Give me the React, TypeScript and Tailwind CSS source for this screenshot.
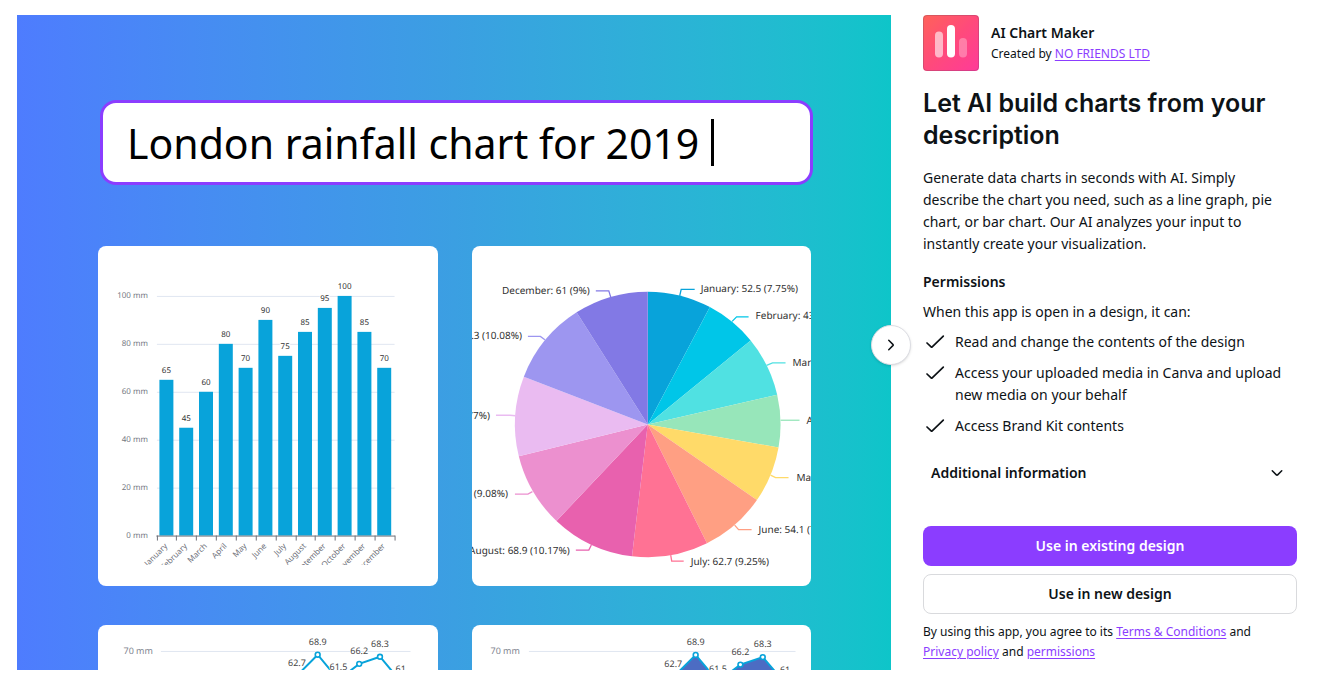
import React from "react";

const bars = [
  { month: "January", value: 65 },
  { month: "February", value: 45 },
  { month: "March", value: 60 },
  { month: "April", value: 80 },
  { month: "May", value: 70 },
  { month: "June", value: 90 },
  { month: "July", value: 75 },
  { month: "August", value: 85 },
  { month: "September", value: 95 },
  { month: "October", value: 100 },
  { month: "November", value: 85 },
  { month: "December", value: 70 },
];

const chartText = "block w-full font-['Noto_Sans',sans-serif] [text-rendering:geometricPrecision]";

function BarChart() {
  const base = 290;
  const step = 19.83;
  return (
    <svg viewBox="0 0 340 340" role="img" aria-label="Rainfall bar chart" className={`${chartText} text-[8px]`}>
      <defs>
        <clipPath id="bar-area">
          <rect x="0" y="0" width="340" height="319.5" />
        </clipPath>
      </defs>
      {[0, 20, 40, 60, 80, 100].map((v) => (
        <g key={v}>
          {v > 0 && <path d={`M59 ${base - v * 2.4 + 0.5}H297`} stroke="#E0E6F1" strokeWidth="1" />}
          <text x="50" y={base - v * 2.4 + 2} textAnchor="end" fill="#747781">
            {v} mm
          </text>
        </g>
      ))}
      {bars.map((b, i) => {
        const cx = 68.5 + i * step;
        const y = base - b.value * 2.4;
        return (
          <g key={b.month}>
            <rect x={cx - 7} y={y} width="14" height={base - y} fill="#08A3DA" />
            <text x={cx} y={y - 7} textAnchor="middle" fill="#333" stroke="#fff" strokeWidth="2" paintOrder="stroke">
              {b.value}
            </text>
          </g>
        );
      })}
      <path d="M58.5 290.5H297.5" stroke="#6E7079" />
      {Array.from({ length: 13 }, (_, i) => (
        <path key={i} d={`M${Math.round(58.5 + i * 19.87) + 0.5} 290V295`} stroke="#6E7079" />
      ))}
      <g clipPath="url(#bar-area)" fill="#6E7079">
        {bars.map((b, i) => (
          <text key={b.month} textAnchor="end" transform={`translate(${70 + i * step} 301) rotate(-45)`}>
            {b.month}
          </text>
        ))}
      </g>
    </svg>
  );
}

const slices = [
  { end: 27.9, fill: "#08A3DA" },
  { end: 50.8, fill: "#00C6E8" },
  { end: 77.1, fill: "#50E1E2" },
  { end: 100, fill: "#97E6BA" },
  { end: 124.7, fill: "#FFDA69" },
  { end: 153.5, fill: "#FF9F83" },
  { end: 186.8, fill: "#FF7294" },
  { end: 223.4, fill: "#E861AE" },
  { end: 256.1, fill: "#EC90CF" },
  { end: 291.1, fill: "#EABBF1" },
  { end: 327.6, fill: "#9D96F0" },
  { end: 360, fill: "#8279E5" },
];

const pieLabels = [
  { text: "January: 52.5 (7.75%)", x: 229, y: 46, line: "M208 50L209.5 43.5H223", anchor: "start", color: "#08A3DA" },
  { text: "February: 43.1 (6.36%)", x: 284, y: 73.5, line: "M260.5 75.5L265 71H277", anchor: "start", color: "#00C6E8" },
  { text: "March: 49.5 (7.31%)", x: 321, y: 120, line: "M295 119.5L301 117H314", anchor: "start", color: "#50E1E2" },
  { text: "April: 43.1 (6.36%)", x: 335, y: 178, line: "M309 174.5H328", anchor: "start", color: "#97E6BA" },
  { text: "May: 46.5 (6.86%)", x: 325, y: 235, line: "M299 229.5L304 232H317", anchor: "start", color: "#FFDA69" },
  { text: "June: 54.1 (7.99%)", x: 287, y: 287, line: "M263 279.5L267 284H280", anchor: "start", color: "#FF9F83" },
  { text: "July: 62.7 (9.25%)", x: 219, y: 319, line: "M199 309.5L200 315.5H212", anchor: "start", color: "#FF7294" },
  { text: "August: 68.9 (10.17%)", x: 98, y: 308, line: "M119.5 299.5L117 304.5H104", anchor: "end", color: "#E861AE" },
  { text: "September: 61.5 (9.08%)", x: 36, y: 251.5, line: "M60.5 246L56 248.5H43", anchor: "end", color: "#EC90CF" },
  { text: "October: 66.2 (9.77%)", x: 18, y: 173, line: "M43.5 170L38 169.5H24", anchor: "end", color: "#EABBF1" },
  { text: "November: 68.3 (10.08%)", x: 50, y: 93, line: "M73 94L68.5 90.5H56", anchor: "end", color: "#9D96F0" },
  { text: "December: 61 (9%)", x: 118, y: 48, line: "M139 51.5L137 45H124", anchor: "end", color: "#8279E5" },
] as const;

function PieChart() {
  const cx = 176;
  const cy = 178.7;
  const r = 133;
  const at = (deg: number) => {
    const a = (deg * Math.PI) / 180;
    return `${(cx + r * Math.sin(a)).toFixed(2)} ${(cy - r * Math.cos(a)).toFixed(2)}`;
  };
  return (
    <svg viewBox="0 0 340 340" role="img" aria-label="Rainfall pie chart" className={`${chartText} text-[10px]`}>
      {slices.map((s, i) => (
        <path
          key={s.fill}
          d={`M${cx} ${cy}L${at(i ? slices[i - 1].end : 0)}A${r} ${r} 0 0 1 ${at(s.end)}Z`}
          fill={s.fill}
        />
      ))}
      {pieLabels.map((l) => (
        <g key={l.text}>
          <path d={l.line} fill="none" stroke={l.color} strokeWidth="1.3" />
          <text x={l.x} y={l.y} textAnchor={l.anchor} fill="#303030">
            {l.text}
          </text>
        </g>
      ))}
    </svg>
  );
}

const rainfall = [52.5, 43.1, 49.5, 43.1, 46.5, 54.1, 62.7, 68.9, 61.5, 66.2, 68.3, 61];

type LineChartProps = {
  filled?: boolean;
  axisX: number;
  gridStart: number;
  gridEnd: number;
  august: number;
  step: number;
  scale: number;
};

function LineChart({ filled, axisX, gridStart, gridEnd, august, step, scale }: LineChartProps) {
  const top = 26;
  const points = rainfall.map((v, i) => ({ v, x: august + (i - 7) * step, y: top + (70 - v) * scale }));
  const line = points.map((p) => `${p.x},${p.y}`).join(" ");
  return (
    <svg viewBox="0 0 340 340" role="img" aria-label="Rainfall line chart" className={`${chartText} text-[9px]`}>
      <path d={`M${gridStart} ${top + 0.5}H${gridEnd}`} stroke="#E0E6F1" />
      <text x={axisX} y="29" textAnchor="end" fill="#80848f">
        70 mm
      </text>
      {filled && <polygon points={`${points[0].x},300 ${line} ${points[11].x},300`} fill="#4C6CC3" />}
      <polyline points={line} fill="none" stroke="#08A3DA" strokeWidth="2" />
      {points.map((p, i) => (
        <g key={i}>
          <circle cx={p.x} cy={p.y} r="2.4" fill="#fff" stroke="#08A3DA" strokeWidth="1.6" />
          <text x={p.x} y={p.y - 10} textAnchor="middle" fill="#464646" stroke="#fff" strokeWidth="1.5" paintOrder="stroke">
            {p.v}
          </text>
        </g>
      ))}
    </svg>
  );
}

function Card({ children }: { children: React.ReactNode }) {
  return <div className="overflow-hidden rounded-lg bg-white">{children}</div>;
}

function Preview() {
  return (
    <section className="relative min-w-0 flex-1">
      <div className="aspect-[874/655] overflow-hidden bg-linear-to-r from-[#4E7CFE] via-[#3B9FE2] to-[#0EC5C9] pt-[85px]">
        <div className="pr-[78px] pl-[83px]">
          <div className="flex h-[85px] items-center gap-3 rounded-2xl border-3 border-[#8B3DFF] bg-white px-6">
            <input
              aria-label="Chart description"
              readOnly
              value="London rainfall chart for 2019"
              className="field-sizing-content max-w-full bg-transparent font-['Noto_Sans',sans-serif] text-[41px] text-black outline-none"
            />
            <span className="h-[47px] w-[3px] bg-black" />
          </div>
        </div>
        <div className="mt-[61px] grid grid-cols-2 gap-x-[34px] gap-y-[39px] pr-[80px] pl-[81px]">
          <Card>
            <BarChart />
          </Card>
          <Card>
            <PieChart />
          </Card>
          <Card>
            <LineChart axisX={55} gridStart={63} gridEnd={313} august={220} step={20.8} scale={3.4} />
          </Card>
          <Card>
            <LineChart filled axisX={48} gridStart={57} gridEnd={324} august={224} step={22.4} scale={3.6} />
          </Card>
        </div>
      </div>
      <button
        type="button"
        aria-label="Next image"
        className="absolute top-[310px] right-0 flex size-10 translate-x-1/2 items-center justify-center rounded-full border border-[#dcdde3] bg-white text-[#0D1216] shadow-sm"
      >
        <svg viewBox="0 0 16 16" className="size-4" fill="none" stroke="currentColor" strokeWidth="1.5" strokeLinecap="round" strokeLinejoin="round">
          <path d="M5.75 3.25L10.1 7.6a.55.55 0 0 1 0 .8L5.75 12.75" />
        </svg>
      </button>
    </section>
  );
}

function AppLogo() {
  return (
    <svg viewBox="0 0 56 56" className="size-14 shrink-0" aria-hidden="true">
      <defs>
        <linearGradient id="logo" x1="0" y1="0" x2="1" y2="1">
          <stop offset="0" stopColor="#FF6259" />
          <stop offset="0.5" stopColor="#FF4A7B" />
          <stop offset="1" stopColor="#FF3A99" />
        </linearGradient>
      </defs>
      <rect width="56" height="56" rx="4" fill="url(#logo)" />
      <rect x="0.5" y="0.5" width="55" height="55" rx="3.5" fill="none" stroke="#3c3c5a" strokeOpacity="0.2" />
      <rect x="12" y="16.5" width="8" height="26" rx="4" fill="#fff" fillOpacity="0.6" />
      <rect x="24" y="10" width="8" height="32.5" rx="4" fill="#fff" />
      <rect x="36" y="23" width="8" height="19.5" rx="4" fill="#fff" fillOpacity="0.3" />
    </svg>
  );
}

const permissions = [
  "Read and change the contents of the design",
  "Access your uploaded media in Canva and upload new media on your behalf",
  "Access Brand Kit contents",
];

const link = "whitespace-nowrap text-[#8B3DFF] underline underline-offset-2";

export default function App() {
  return (
    <main className="flex gap-8 bg-white pt-[15px] pr-[34px] pb-[18px] pl-[17px] font-['Noto_Sans',sans-serif] text-sm leading-[22px] text-[#0D1216]">
      <Preview />
      <aside className="flex w-[374px] shrink-0 flex-col pb-2">
        <header className="flex items-center gap-3">
          <AppLogo />
          <div>
            <p className="font-semibold">AI Chart Maker</p>
            <p className="text-xs leading-5">
              Created by <a href="#developer" className={link}>NO FRIENDS LTD</a>
            </p>
          </div>
        </header>
        <h1 className="mt-4 font-['Inter',sans-serif] text-[25px] leading-8 font-semibold">Let AI build charts from your description</h1>
        <p className="mt-4 pr-2">
          Generate data charts in seconds with AI. Simply describe the chart you need, such as a line graph, pie chart, or bar chart. Our AI analyzes your input to instantly create your visualization.
        </p>
        <h2 className="mt-4 font-semibold">Permissions</h2>
        <p className="mt-2">When this app is open in a design, it can:</p>
        <ul className="mt-2 flex flex-col gap-[9px]">
          {permissions.map((p) => (
            <li key={p} className="flex gap-2">
              <svg viewBox="0 1 24 22" className="h-[22px] w-6 shrink-0" fill="none" stroke="currentColor" strokeWidth="1.7" strokeLinecap="round" strokeLinejoin="round" aria-hidden="true">
                <path d="M4 13L8.1 16.9a.8.8 0 0 0 1.1 0L20.3 6.1" />
              </svg>
              <span>{p}</span>
            </li>
          ))}
        </ul>
        <button type="button" className="mt-4 mb-4 flex h-10 items-center justify-between pr-3 pl-2 font-semibold">
          Additional information
          <svg viewBox="0 0 16 16" className="size-4" fill="none" stroke="currentColor" strokeWidth="1.5" strokeLinecap="round" strokeLinejoin="round" aria-hidden="true">
            <path d="M3.25 5.75L7.6 10.1a.55.55 0 0 0 .8 0L12.75 5.75" />
          </svg>
        </button>
        <div className="mt-auto flex flex-col gap-2">
          <button type="button" className="h-10 rounded-lg bg-[#8B3DFF] font-semibold text-white">Use in existing design</button>
          <button type="button" className="h-10 rounded-lg border border-[#d9dadd] bg-white font-semibold">Use in new design</button>
          <p className="text-xs leading-5">
            By using this app, you agree to its <a href="#terms" className={link}>Terms &amp; Conditions</a> and{" "}
            <a href="#privacy" className={link}>Privacy policy</a> and <a href="#permissions" className={link}>permissions</a>
          </p>
        </div>
      </aside>
    </main>
  );
}
